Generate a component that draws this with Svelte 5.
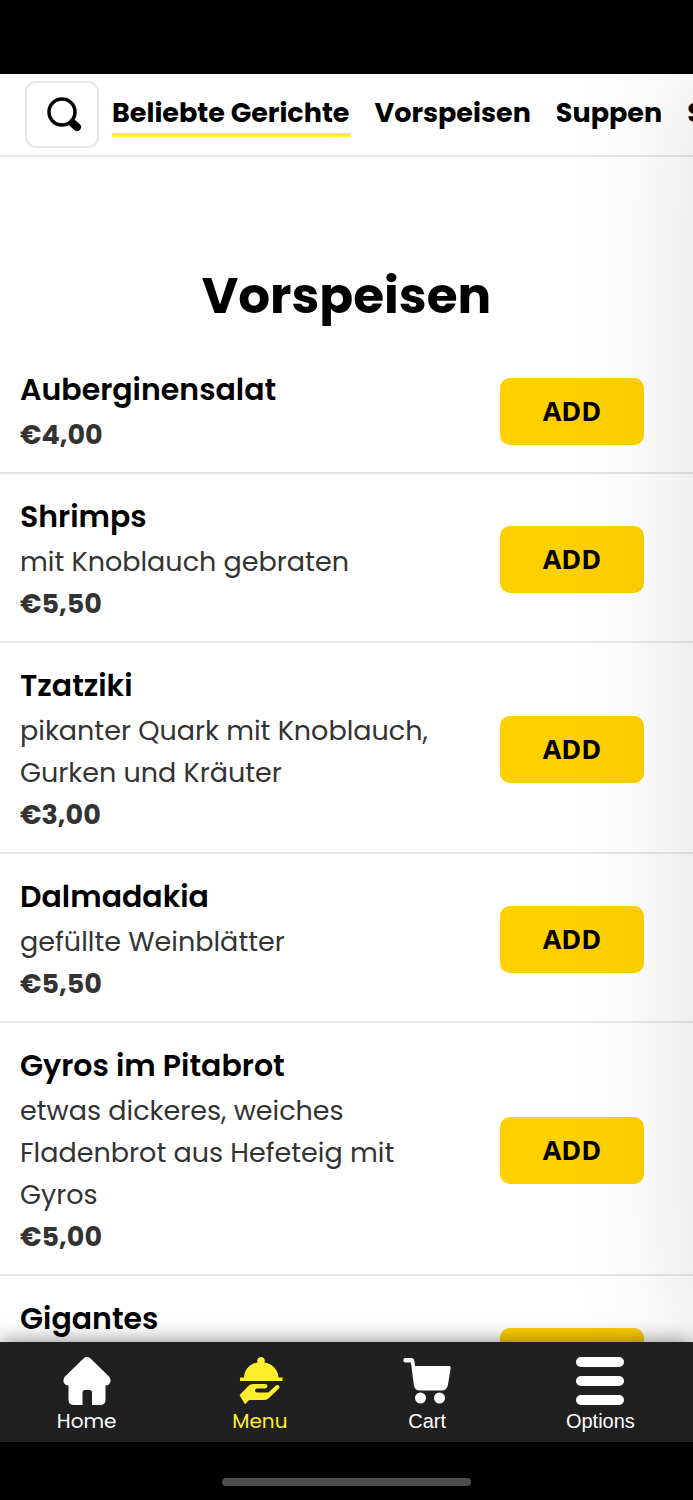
<script lang="ts">
    type Dish = {
        name: string;
        price: string;
        description?: string;
    };

    const categories = ["Beliebte Gerichte", "Vorspeisen", "Suppen", "Salate"];

    const dishes: Dish[] = [
        { name: "Auberginensalat", price: "€4,00" },
        { name: "Shrimps", description: "mit Knoblauch gebraten", price: "€5,50" },
        {
            name: "Tzatziki",
            description: "pikanter Quark mit Knoblauch, Gurken und Kräuter",
            price: "€3,00",
        },
        { name: "Dalmadakia", description: "gefüllte Weinblätter", price: "€5,50" },
        {
            name: "Gyros im Pitabrot",
            description: "etwas dickeres, weiches Fladenbrot aus Hefeteig mit Gyros",
            price: "€5,00",
        },
        { name: "Gigantes", description: "", price: "" },
    ];

    let active = $state("Beliebte Gerichte");
</script>

<div class="screen">
    <div class="status-bar"></div>

    <div class="page">
        <nav class="categories">
            <button class="search" aria-label="Suche">
                <svg width="36" height="36" viewBox="0 0 36 36">
                    <circle cx="16" cy="15" r="13" fill="none" stroke="#000" stroke-width="3.500" />
                    <path d="M24 23l3 3" stroke="#000" stroke-width="5" />
                    <path d="M27 26.500l4 3.500" stroke="#000" stroke-width="8" stroke-linecap="round" />
                </svg>
            </button>
            {#each categories as category}
                <button
                    class="tab"
                    class:active={category === active}
                    onclick={() => (active = category)}
                >
                    {category}
                </button>
            {/each}
        </nav>

        <main>
            <h1>Vorspeisen</h1>
            <ul>
                {#each dishes as dish}
                    <li>
                        <div class="info">
                            <h2>{dish.name}</h2>
                            {#if dish.description !== undefined}
                                <p>{dish.description}</p>
                            {/if}
                            <p class="price">{dish.price}</p>
                        </div>
                        <button class="add">ADD</button>
                    </li>
                {/each}
            </ul>
        </main>

        <div class="edge-shade"></div>
    </div>

    <nav class="bottom">
        <a href="#home">
            <svg width="48" height="48" viewBox="0 0 48 48" fill="currentColor">
                <path d="M20.500 1.500Q24-1.300 27.500 1.500L46 19.500Q48.500 22.500 47 26Q45.500 28.500 42.500 28.500V42.500Q42.500 48 37 48H29V35.500Q29 33 26.500 33H22Q19.500 33 19.500 35.500V48H11Q5.500 48 5.500 42.500V28.500Q2.500 28.500 1 26Q-.5 22.500 2 19.500Z" />
            </svg>
            <span>Home</span>
        </a>
        <a href="#menu" class="current">
            <svg width="48" height="48" viewBox="0 0 48 48" fill="currentColor">
                <path d="M21.500 5.500C20.500 2 22.500 0 25 0s4.500 2 3.500 5.500C36.500 7 42 12.500 42.500 20.500H46.500V24H4V20.500H8C8.500 12.500 13.500 7 21.500 5.500Z" />
                <path d="M3.500 38L10.500 31Q13.500 27 17 27H29Q31.500 27 31.500 29T29 31.500H21Q19 31.500 19 33.500T21 35.500H31Q32.500 35.500 34 34L39.500 28.800Q41 27.300 42.500 28.300Q44.300 29.700 42.800 31.500L33.500 40.500Q31 43 28 43H14.500Q13 43 12 44L9.500 47Q9 47.500 8.500 46.500Z" />
            </svg>
            <span>Menu</span>
        </a>
        <a href="#cart" class="plain">
            <svg width="48" height="48" viewBox="0 0 48 48" fill="currentColor">
                <path d="M2.500 1H8Q11 1 11.400 4L12 9H46Q48 9 47.700 11L45 27.500Q44 33.500 39 33.500H17Q11.500 33.500 10.800 28L8 5.500H2.500Q.3 5.500.3 3.300T2.500 1Z" />
                <circle cx="17.500" cy="41" r="5.500" />
                <circle cx="36.500" cy="41" r="5.500" />
            </svg>
            <span>Cart</span>
        </a>
        <a href="#options" class="plain">
            <svg width="48" height="48" viewBox="0 0 48 48" fill="currentColor">
                <rect width="48" height="10" rx="5" />
                <rect y="19" width="48" height="10" rx="5" />
                <rect y="38" width="48" height="10" rx="5" />
            </svg>
            <span>Options</span>
        </a>
    </nav>

    <div class="home-area">
        <div class="home-indicator"></div>
    </div>
</div>

<style>
    :global(body) {
        margin: 0;
        background: #000;
    }

    .screen {
        display: flex;
        flex-direction: column;
        height: 100vh;
        overflow: hidden;
        font-family: Poppins, Inter, sans-serif;
        color: #000;
    }

    button {
        padding: 0;
        border: none;
        background: none;
        color: inherit;
        font-family: inherit;
        cursor: pointer;
    }

    .status-bar {
        flex: none;
        height: 74px;
    }

    .page {
        position: relative;
        display: flex;
        flex-direction: column;
        flex: 1;
        min-height: 0;
        overflow: hidden;
        background: #fff;
    }

    .categories {
        display: flex;
        align-items: center;
        flex: none;
        gap: 25px;
        padding: 7px 0 7px 25px;
        border-bottom: 2px solid #e6e6e6;
        overflow: hidden;
    }

    .search {
        display: flex;
        align-items: center;
        justify-content: center;
        flex: none;
        box-sizing: border-box;
        width: 74px;
        height: 67px;
        margin-right: -12px;
        padding-left: 3px;
        border: 2px solid #e6e6e6;
        border-radius: 11px;
    }

    .tab {
        flex: none;
        border-bottom: 4px solid transparent;
        font-size: 27px;
        font-weight: 700;
        line-height: 41px;
        white-space: nowrap;
    }

    .tab.active {
        border-color: #ffed2e;
    }

    main {
        flex: 1;
        min-height: 0;
        overflow-y: auto;
        scrollbar-width: none;
    }

    h1 {
        margin: 101px 0 13px;
        font-size: 50px;
        font-weight: 700;
        line-height: 76px;
        text-align: center;
    }

    ul {
        margin: 0;
        padding: 0;
        list-style: none;
    }

    li {
        display: flex;
        align-items: center;
        gap: 50px;
        padding: 20px 49px 16px 20px;
        border-bottom: 2px solid #e6e6e6;
    }

    .info {
        flex: 1;
    }

    h2 {
        margin: 0 0 2px;
        font-size: 30px;
        font-weight: 600;
        line-height: 45px;
    }

    p {
        min-height: 42px;
        margin: 0;
        color: #333;
        font-size: 27px;
        line-height: 42px;
    }

    .price {
        font-weight: 700;
    }

    .add {
        flex: none;
        width: 144px;
        height: 67px;
        padding-bottom: 2px;
        border-radius: 10px;
        background: #ffd000;
        font-family: "Open Sans", sans-serif;
        font-size: 27px;
        font-weight: 700;
    }

    /* shadow of the panel sitting off to the right */
    .edge-shade {
        position: absolute;
        top: 0;
        bottom: 0;
        left: 100%;
        width: 100%;
        box-shadow: 0 0 120px rgba(0, 0, 0, 0.13);
        pointer-events: none;
    }

    .bottom {
        position: relative;
        display: grid;
        grid-template-columns: repeat(4, minmax(0, 1fr));
        flex: none;
        box-sizing: border-box;
        height: 100px;
        padding-top: 15px;
        background: #202020;
        box-shadow: 0 0 20px rgba(0, 0, 0, 0.5);
    }

    .bottom a {
        display: flex;
        flex-direction: column;
        align-items: center;
        gap: 2px;
        color: #fff;
        font-size: 20px;
        line-height: 28px;
        text-decoration: none;
    }

    .bottom a.current {
        color: #ffed2e;
    }

    .bottom a.plain {
        padding-right: 12px;
        font-family: "Liberation Sans", Arial, sans-serif;
    }

    .home-area {
        display: flex;
        justify-content: center;
        flex: none;
        box-sizing: border-box;
        height: 58px;
        padding-top: 36px;
        background: #000;
    }

    .home-indicator {
        width: 36%;
        height: 8px;
        border-radius: 4px;
        background: #4d4d4d;
    }
</style>
